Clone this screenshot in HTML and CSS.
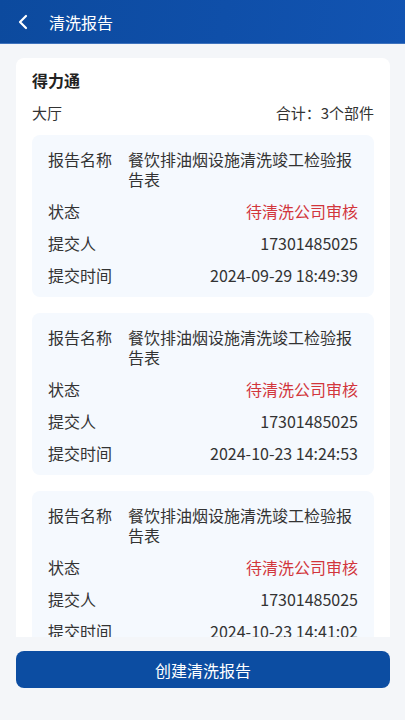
FILE: index.html
```html
<!DOCTYPE html>
<html lang="zh">
<head>
<meta charset="utf-8">
<title>清洗报告</title>
<link rel="stylesheet" href="styles.css">
</head>
<body>
<div class="page">
  <header class="topbar">
    <svg class="back" width="12" height="16" viewBox="0 0 12 16"><path d="M9 2 L3 8 L9 14" fill="none" stroke="#fff" stroke-width="2.2" stroke-linecap="round" stroke-linejoin="round"/></svg>
    <span class="title">清洗报告</span>
  </header>
  <main class="scroll">
    <section class="card">
      <div class="shop">得力通</div>
      <div class="area"><span>大厅</span><span>合计：3个部件</span></div>
      <div class="items">
        <div class="item">
          <div class="row"><span class="label">报告名称</span><span class="value left">餐饮排油烟设施清洗竣工检验报告表</span></div>
          <div class="row"><span class="label">状态</span><span class="value red">待清洗公司审核</span></div>
          <div class="row"><span class="label">提交人</span><span class="value">17301485025</span></div>
          <div class="row"><span class="label">提交时间</span><span class="value">2024-09-29 18:49:39</span></div>
        </div>
        <div class="item">
          <div class="row"><span class="label">报告名称</span><span class="value left">餐饮排油烟设施清洗竣工检验报告表</span></div>
          <div class="row"><span class="label">状态</span><span class="value red">待清洗公司审核</span></div>
          <div class="row"><span class="label">提交人</span><span class="value">17301485025</span></div>
          <div class="row"><span class="label">提交时间</span><span class="value">2024-10-23 14:24:53</span></div>
        </div>
        <div class="item">
          <div class="row"><span class="label">报告名称</span><span class="value left">餐饮排油烟设施清洗竣工检验报告表</span></div>
          <div class="row"><span class="label">状态</span><span class="value red">待清洗公司审核</span></div>
          <div class="row"><span class="label">提交人</span><span class="value">17301485025</span></div>
          <div class="row"><span class="label">提交时间</span><span class="value">2024-10-23 14:41:02</span></div>
        </div>
      </div>
    </section>
  </main>
  <footer class="bottom">
    <button class="create">创建清洗报告</button>
  </footer>
</div>
</body>
</html>
```
FILE: styles.css
```css
* { box-sizing: border-box; }
html, body { margin: 0; padding: 0; }
body {
  font-family: "Noto Sans CJK SC", "Noto Sans", sans-serif;
  background: #f4f6f9;
  color: #333;
}
.page {
  width: 405px;
  height: 720px;
  display: flex;
  flex-direction: column;
  overflow: hidden;
}
.topbar {
  height: 44px;
  flex: none;
  display: flex;
  align-items: center;
  padding-left: 17px;
  background: linear-gradient(100deg, #0c4a9e 0%, #0f4fa9 55%, #1254b2 100%);
  border-bottom: 1px solid #3f73bd;
}
.back { display: block; margin-right: 20px; }
.title { color: #fff; font-size: 16px; line-height: 22px; }
.scroll {
  flex: 1;
  overflow: hidden;
  padding: 14px 15px 0 16px;
}
.card {
  background: #fff;
  border-radius: 8px;
  padding: 11px 16px 16px 16px;
}
.shop { font-size: 16px; font-weight: 700; line-height: 22px; color: #222; }
.area {
  display: flex;
  justify-content: space-between;
  font-size: 15px;
  line-height: 22px;
  margin-top: 11px;
  color: #333;
}
.items { display: flex; flex-direction: column; gap: 16px; margin-top: 11px; }
.item {
  background: #f5f9fe;
  border-radius: 8px;
  padding: 14px 16px 12px 16px;
  display: flex;
  flex-direction: column;
  gap: 12px;
}
.row { display: flex; font-size: 16px; line-height: 20px; }
.label { width: 80px; flex: none; color: #333; }
.value { flex: 1; text-align: right; color: #333; }
.value.left { text-align: left; }
.value.red { color: #d2363c; }
.bottom {
  height: 83px;
  flex: none;
  padding: 14px 15px 0 16px;
  background: #f4f6f9;
}
.create {
  width: 100%;
  height: 37px;
  border: none;
  border-radius: 8px;
  background: #0c4da2;
  color: #fff;
  font-family: inherit;
  font-size: 16px;
}
```
